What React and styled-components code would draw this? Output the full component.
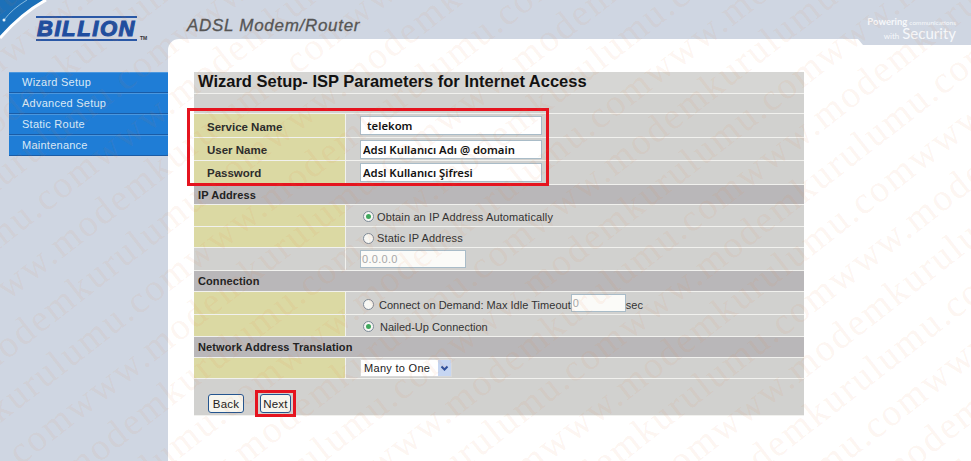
import React from "react";
import styled, { createGlobalStyle } from "styled-components";

const Global = createGlobalStyle`
  html, body { margin: 0; padding: 0; background: #fff; }
  body { font-family: "Liberation Sans", Arial, sans-serif; }
`;

const Page = styled.div`
  position: relative;
  width: 971px;
  height: 461px;
  overflow: hidden;
  background: #cfd6e2;
  display: flex;
  flex-direction: column;
`;

const Header = styled.header`
  position: relative;
  z-index: 1;
  height: 39px;
  flex: none;
  display: flex;
  align-items: flex-start;
`;

const Swoosh = styled.svg`
  position: absolute;
  left: 0;
  top: 0;
`;

const LogoCell = styled.div`
  width: 187px;
  flex: none;
  padding: 16px 0 0 36px;
  box-sizing: border-box;
  display: flex;
  align-items: flex-end;
`;

const Logo = styled.div`
  width: 101px;
  height: 25px;
  box-sizing: border-box;
  border-top: 2px solid #2a58a6;
  border-bottom: 2px solid #2a58a6;
  color: #1f4e9f;
  font: italic 900 22px/21px "Liberation Sans", sans-serif;
  letter-spacing: 1.6px;
  text-align: center;
  overflow: hidden;
  -webkit-text-stroke: 1.1px #1f4e9f;
`;

const Tm = styled.span`
  font: bold 5px "Liberation Sans", sans-serif;
  color: #333;
  margin-left: 3px;
`;

const Product = styled.div`
  padding-top: 16px;
  font: italic 17px/20px "Liberation Sans", sans-serif;
  color: #555;
  letter-spacing: 0.7px;
  -webkit-text-stroke: 0.3px #555;
`;

const Tagline = styled.div`
  margin-left: auto;
  padding: 14px 15px 0 0;
  text-align: right;
  color: #f6f8fb;
  font-family: "Lato", sans-serif;
  line-height: 10px;
`;

const Power = styled.span`
  font-size: 9.5px;
  font-weight: 700;
`;

const Small = styled.span`
  font-size: 6.5px;
  margin-left: 2px;
`;

const With = styled.span`
  font-size: 8px;
`;

const Big = styled.span`
  font-size: 15px;
  font-weight: 400;
  margin-left: 3px;
`;

const Body = styled.div`
  flex: 1;
  display: flex;
  min-height: 0;
`;

const Sidebar = styled.nav`
  width: 168px;
  flex: none;
  padding: 33px 0 0 9px;
  box-sizing: border-box;
`;

const NavItem = styled.div`
  height: 21px;
  box-sizing: border-box;
  padding-left: 13px;
  background: #1f7dd6;
  border-top: 1px solid #4b97de;
  border-bottom: 1px solid #1a5ca6;
  color: #d9e9f6;
  font-size: 11px;
  line-height: 18px;
  letter-spacing: 0.25px;
`;

const Main = styled.main`
  flex: 1;
  background: #fff;
  border-top-left-radius: 11px;
`;

const Corner = styled.div`
  width: 113px;
  height: 6px;
  margin-left: auto;
  background: #cfd6e2;
  clip-path: polygon(0 0, 100% 0, 100% 100%, 5px 100%);
`;

const Content = styled.div`
  padding: 27px 0 0 26px;
`;

const Panel = styled.div`
  position: relative;
  width: 610px;
`;

const Row = styled.div`
  height: ${(p) => p.$h}px;
  box-sizing: border-box;
  display: flex;
  background: ${(p) => p.$bg || "#d1d1cf"};
  border-bottom: 1px solid #f1f1ee;
`;

const Title = styled.h1`
  margin: 0;
  padding-left: 4px;
  font-size: 16.5px;
  font-weight: bold;
  line-height: 19px;
  color: #111;
`;

const SectionTitle = styled.div`
  padding-left: 4px;
  font-size: 11px;
  font-weight: bold;
  line-height: 21px;
  color: #222;
  letter-spacing: 0.1px;
`;

const Label = styled.div`
  width: 152px;
  flex: none;
  box-sizing: border-box;
  padding-left: 13px;
  background: ${(p) => (p.$plain ? "transparent" : "#dbd9a3")};
  border-right: 1px solid #f1f1ee;
  font-size: 11.5px;
  font-weight: bold;
  line-height: ${(p) => p.$line || 24}px;
  color: #2c2c2c;
`;

const Value = styled.div`
  flex: 1;
  padding: ${(p) => p.$top || 0}px 0 0 14px;
  display: flex;
  align-items: center;
  font-size: 11px;
  color: #333;
  letter-spacing: ${(p) => p.$ls ?? 0.13}px;
  white-space: pre;
`;

const TextField = styled.input`
  width: ${(p) => p.$w || 182}px;
  height: ${(p) => p.$height || 19}px;
  margin-top: ${(p) => p.$lift || 0}px;
  box-sizing: border-box;
  padding: 0 0 0 ${(p) => p.$indent ?? 2}px;
  border: 1px solid #a9bcc8;
  border-radius: 0;
  outline: none;
  background: #fff;
  color: #111;
  font: 600 11.3px "Noto Sans", sans-serif;
  &:disabled {
    font: 11px "Liberation Sans", sans-serif;
    color: #a8a8a8;
    letter-spacing: 0.3px;
    background: #fbfbf8;
  }
`;

const Radio = styled.input.attrs({ type: "radio" })`
  appearance: none;
  width: 11px;
  height: 11px;
  margin: 0 ${(p) => p.$gap ?? 3}px 0 3px;
  box-sizing: border-box;
  border: 1px solid #7d8b99;
  border-radius: 50%;
  background: #f7f7f4;
  display: inline-grid;
  place-items: center;
  flex: none;
  &:checked::after {
    content: "";
    width: 5px;
    height: 5px;
    border-radius: 50%;
    background: #3fa85c;
  }
`;

const SelectWrap = styled.div`
  position: relative;
  width: 92px;
  height: 18px;
`;

const Select = styled.select`
  appearance: none;
  width: 100%;
  height: 100%;
  padding: 0 0 0 3px;
  border: 1px solid #d8d8d8;
  border-radius: 0;
  background: #fff;
  color: #222;
  font: 11px "Liberation Sans", sans-serif;
  letter-spacing: 0.3px;
`;

const SelectArrow = styled.svg`
  position: absolute;
  right: 1px;
  top: 1px;
  background: #c6d6f2;
  pointer-events: none;
`;

const Actions = styled.div`
  flex: 1;
  display: flex;
  gap: 16px;
  padding: 15px 0 0 14px;
  align-items: flex-start;
`;

const Button = styled.button`
  width: ${(p) => p.$w}px;
  height: 19px;
  padding: 0;
  box-sizing: border-box;
  border: 1px solid #24558f;
  border-radius: 3px;
  background: #f6f5ee;
  color: #222;
  font: 11.5px "Liberation Sans", sans-serif;
  letter-spacing: 0.2px;
`;

const Annotation = styled.div`
  position: absolute;
  left: ${(p) => p.$x}px;
  top: ${(p) => p.$y}px;
  width: ${(p) => p.$w}px;
  height: ${(p) => p.$h}px;
  box-sizing: border-box;
  border: 3px solid #e5141f;
  pointer-events: none;
`;

const Watermark = styled.div`
  position: absolute;
  z-index: 2;
  left: -260px;
  top: -420px;
  width: 1700px;
  height: 1400px;
  transform: rotate(-38deg);
  pointer-events: none;
  overflow: hidden;
`;

const MarkLine = styled.div`
  height: 46px;
  white-space: nowrap;
  font: 38px/46px "Liberation Serif", serif;
  letter-spacing: 2px;
  color: rgba(235, 120, 50, 0.085);
  margin-left: ${(p) => p.$shift}px;
`;

const NAV = ["Wizard Setup", "Advanced Setup", "Static Route", "Maintenance"];
const MARK = "www.modemkurulumu.com".repeat(5);
const noop = () => {};

export default function App() {
  return (
    <Page>
      <Global />
      <Header>
        <Swoosh width="60" height="40" viewBox="0 0 60 40">
          <path d="M0 0H46Q22 13 0 38Z" fill="#1c70b8" />
          <path d="M46 0Q22 13 0 38" fill="none" stroke="#fff" strokeWidth="3" />
          <path d="M27 0Q12 9 4 20" fill="none" stroke="#9fcbe8" strokeWidth="0.8" />
          <circle cx="4" cy="20" r="1.5" fill="#e3f1fa" />
        </Swoosh>
        <LogoCell>
          <Logo>BILLION</Logo>
          <Tm>TM</Tm>
        </LogoCell>
        <Product>ADSL Modem/Router</Product>
        <Tagline>
          <Power>Powering</Power>
          <Small>communications</Small>
          <br />
          <With>with</With>
          <Big>Security</Big>
        </Tagline>
      </Header>
      <Body>
        <Sidebar>
          {NAV.map((n) => (
            <NavItem key={n}>{n}</NavItem>
          ))}
        </Sidebar>
        <Main>
          <Corner />
          <Content>
            <Panel>
              <Row $h={22} $bg="#d6d6d4">
                <Title>Wizard Setup- ISP Parameters for Internet Access</Title>
              </Row>
              <Row $h={20} />
              <Row $h={24}>
                <Label $line={27}>Service Name</Label>
                <Value>
                  <TextField $indent={6} value="telekom" onChange={noop} />
                </Value>
              </Row>
              <Row $h={23}>
                <Label>User Name</Label>
                <Value>
                  <TextField value="Adsl Kullanıcı Adı @ domain" onChange={noop} />
                </Value>
              </Row>
              <Row $h={24}>
                <Label>Password</Label>
                <Value>
                  <TextField value="Adsl Kullanıcı Şifresi" onChange={noop} />
                </Value>
              </Row>
              <Row $h={20} $bg="#b9b7b9">
                <SectionTitle>IP Address</SectionTitle>
              </Row>
              <Row $h={22}>
                <Label />
                <Value $top={2}>
                  <Radio name="ip" defaultChecked />
                  Obtain an IP Address Automatically
                </Value>
              </Row>
              <Row $h={21}>
                <Label />
                <Value $top={2}>
                  <Radio name="ip" />
                  Static IP Address
                </Value>
              </Row>
              <Row $h={23}>
                <Label $plain />
                <Value>
                  <TextField $w={106} $height={18} $indent={1} disabled value="0.0.0.0" />
                </Value>
              </Row>
              <Row $h={21} $bg="#b9b7b9">
                <SectionTitle>Connection</SectionTitle>
              </Row>
              <Row $h={23}>
                <Label />
                <Value $top={3} $ls={0.03}>
                  <Radio name="conn" $gap={5} />
                  Connect on Demand: Max Idle Timeout
                  <TextField $w={55} $height={18} $indent={1} $lift={-3} disabled value="0" />
                  sec
                </Value>
              </Row>
              <Row $h={22}>
                <Label />
                <Value $top={2} $ls={0}>
                  <Radio name="conn" $gap={6} defaultChecked />
                  Nailed-Up Connection
                </Value>
              </Row>
              <Row $h={21} $bg="#b9b7b9">
                <SectionTitle>Network Address Translation</SectionTitle>
              </Row>
              <Row $h={21}>
                <Label />
                <Value>
                  <SelectWrap>
                    <Select defaultValue="many">
                      <option value="many">Many to One</option>
                    </Select>
                    <SelectArrow width="13" height="16" viewBox="0 0 13 16">
                      <path d="M3.5 6.5L6.5 9.5L9.5 6.5" fill="none" stroke="#2b4f9c" strokeWidth="2" />
                    </SelectArrow>
                  </SelectWrap>
                </Value>
              </Row>
              <Row $h={37}>
                <Actions>
                  <Button $w={36}>Back</Button>
                  <Button $w={31}>Next</Button>
                </Actions>
              </Row>
              <Annotation $x={-7} $y={36} $w={362} $h={78} />
              <Annotation $x={61} $y={318} $w={41} $h={27} />
            </Panel>
          </Content>
        </Main>
      </Body>
      <Watermark aria-hidden="true">
        {Array.from({ length: 30 }, (_, i) => (
          <MarkLine key={i} $shift={-((i * 137) % 420)}>
            {MARK}
          </MarkLine>
        ))}
      </Watermark>
    </Page>
  );
}
